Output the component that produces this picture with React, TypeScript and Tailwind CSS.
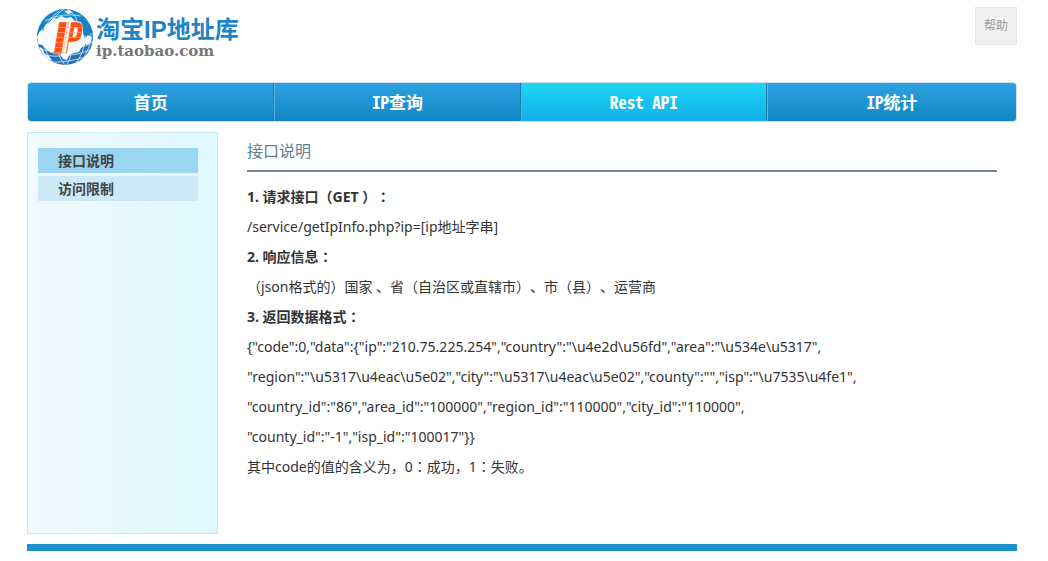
import React from "react";

const navItems = [
  { label: "首页", active: false },
  { label: "IP查询", active: false },
  { label: "Rest API", active: true },
  { label: "IP统计", active: false },
];

const sideItems = [
  { label: "接口说明", active: true },
  { label: "访问限制", active: false },
];

function GlobeLogo() {
  return (
    <svg viewBox="0 0 56 56" className="h-14 w-14 shrink-0" aria-hidden="true">
      <defs>
        <linearGradient id="sea" x1="0" y1="0" x2="0" y2="1">
          <stop offset="0" stopColor="#1489cf" />
          <stop offset="1" stopColor="#2a6cb0" />
        </linearGradient>
        <clipPath id="disc">
          <circle cx="28" cy="28" r="28" />
        </clipPath>
      </defs>
      <g clipPath="url(#disc)">
        <rect width="56" height="56" fill="url(#sea)" />
        <g fill="none" stroke="#c9e2f3" strokeWidth="0.900">
          <path d="M8 12Q24 3 44 7M2 24Q12 12 22 9M1 40Q18 44 36 40T56 32M5 46Q30 50 54 41M12 53Q30 54 48 48" />
          <path d="M22 2Q8 12 4 30M27 0Q17 6 14 18M30 0Q38 4 40 12M8 38Q10 48 18 55M20 40Q22 50 28 56M48 26Q48 44 38 55M54 24Q54 38 46 50M34 40Q34 50 30 56" />
        </g>
        <path
          d="M16 9l4 1 4-3 5 2 5-1 4 4 6 1 2 6 0 5 2 7 0 5-4 3-2 4-5 1-5 2-2 5-4-1-3-5-5-2-4 1-5-4-4-4-4-1-1-7 3-6 4-1 1-5 4-2z"
          fill="#f8fbfe"
        />
        <path d="M2 38l3 1 3 6 4 2 3 5-6-2zM47 30l4-4 4 2-1 5-4 3-3-2zM27 2l6-1 2 3-4 1z" fill="#f1f8fd" />
      </g>
      <path
        d="M22 13h8l-5.500 32h-8zM32 13h8q6.500 0 5.500 8l-1 5q-1 7-9 7h-3.500l-2 12h-4zM34 13l-5.500 32h-3l5.500-32zM37.500 18l-1.700 10h1.700q1.800 0 2.200-3l.7-4q.4-3-1.400-3z"
        fill="#ff5012"
        fillRule="evenodd"
        stroke="#fff"
        strokeWidth="0.400"
      />
      <path
        d="M22 18.500h22M21 23.500h23M20 28.500h23M19 33.500h16M18 38.500h13M18 43.500h12"
        stroke="#ffb48c"
        strokeWidth="0.600"
      />
    </svg>
  );
}

/* The full-width colon sits in the middle of its square. */
function Colon() {
  return <span className="font-['Noto_Sans','Noto_Sans_CJK_TC',sans-serif]">：</span>;
}

export default function App() {
  return (
    <div className="bg-white pr-[31px] pl-[27px] font-['Noto_Sans','Noto_Sans_CJK_SC',sans-serif] text-[14px] text-[#333333] [text-spacing-trim:space-all]">
      <header className="flex h-[82px] items-start justify-between">
        <a href="#" className="flex pt-[9px] pl-[10px]">
          <GlobeLogo />
          <span className="flex flex-col pt-2 pl-[3px]">
            <span className="font-['Liberation_Sans','Noto_Sans_CJK_SC',sans-serif] text-[24px] leading-[26px] font-bold text-[#1c84c8]">
              淘宝IP地址库
            </span>
            <span className="font-['DejaVu_Serif',serif] text-[15px] leading-[17px] font-bold text-[#777777]">
              ip.taobao.com
            </span>
          </span>
        </a>
        <a
          href="#"
          className="mt-[7px] flex h-[38px] w-[42px] items-center justify-center border border-[#e5e5e5] bg-[#f0f0f0] text-[12px] text-[#999999]"
        >
          帮助
        </a>
      </header>

      <nav className="grid h-10 grid-cols-[1fr_1fr_1fr_25.2%] overflow-hidden rounded border border-[#cfe0ea]">
        {navItems.map((item) => (
          <a
            key={item.label}
            href="#"
            className={
              "flex items-center justify-center border-r border-l border-r-[#2779a8] border-l-[#5cb3e2] bg-linear-to-b font-['Noto_Sans_Mono_CJK_SC','Noto_Sans_CJK_SC',sans-serif] text-[17px] font-bold text-white first:border-l-0 last:border-r-0 " +
              (item.active ? "from-[#1fd5f5] to-[#12b0e8]" : "from-[#2da2e2] to-[#1186c2]")
            }
          >
            {item.label}
          </a>
        ))}
      </nav>

      <div className="mt-[10px] flex">
        <aside className="min-h-[402px] w-[191px] shrink-0 border border-[#c5ebf5] bg-linear-to-r from-[#f0faff] to-[#dff8ff] pt-[15px] pr-[19px] pl-[10px]">
          <ul className="flex flex-col gap-[3px]">
            {sideItems.map((item) => (
              <li key={item.label}>
                <a
                  href="#"
                  className={
                    "block pl-5 leading-[25px] font-bold text-[#444444] " +
                    (item.active ? "bg-[#9ad5f1]" : "bg-[#cde9f8]")
                  }
                >
                  {item.label}
                </a>
              </li>
            ))}
          </ul>
        </aside>

        <main className="mr-5 ml-[29px] min-w-0 flex-1">
          <h1 className="mb-[10px] h-10 border-b-2 border-[#75859b] text-[16px] leading-[38px] text-[#5c8296]">
            接口说明
          </h1>
          <div className="leading-[30px]">
            <h2 className="font-bold">
              1. 请求接口（GET ）<Colon />
            </h2>
            <p>/service/getIpInfo.php?ip=[ip地址字串]</p>
            <h2 className="font-bold">
              2. 响应信息<Colon />
            </h2>
            <p>（json格式的）国家 、省（自治区或直辖市）、市（县）、运营商</p>
            <h2 className="font-bold">
              3. 返回数据格式<Colon />
            </h2>
            <p>{'{"code":0,"data":{"ip":"210.75.225.254","country":"\\u4e2d\\u56fd","area":"\\u534e\\u5317",'}</p>
            <p>{'"region":"\\u5317\\u4eac\\u5e02","city":"\\u5317\\u4eac\\u5e02","county":"","isp":"\\u7535\\u4fe1",'}</p>
            <p>{'"country_id":"86","area_id":"100000","region_id":"110000","city_id":"110000",'}</p>
            <p>{'"county_id":"-1","isp_id":"100017"}}'}</p>
            <p>
              其中code的值的含义为，0<Colon />成功，1<Colon />失败。
            </p>
          </div>
        </main>
      </div>

      <footer className="mt-[10px] mb-[10px] h-[7px] bg-[#1b91cd]" />
    </div>
  );
}
